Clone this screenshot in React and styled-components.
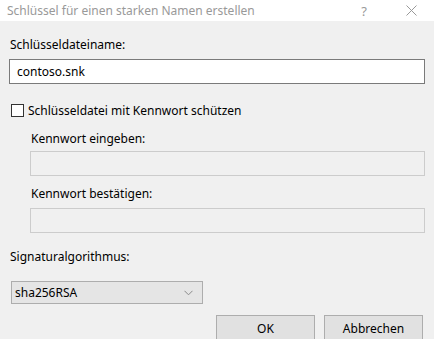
import React from 'react'
import styled, { createGlobalStyle } from 'styled-components'

const Global = createGlobalStyle`
  html, body {
    margin: 0;
    padding: 0;
    background: #f0f0f0;
    overflow: hidden;
  }
  * {
    box-sizing: border-box;
  }
`

const Dialog = styled.div`
  width: 434px;
  height: 339px;
  background: #f0f0f0;
  font-family: 'Noto Sans', 'Open Sans', sans-serif;
  font-size: 12px;
  color: #000;
  overflow: hidden;
`

const TitleBar = styled.div`
  height: 21px;
  background: #fff;
  display: flex;
  align-items: center;
  padding-left: 7px;
  color: #999;
  font-size: 12px;
`

const Title = styled.span`
  flex: 1;
`

const TitleButton = styled.span`
  width: ${props => props.w}px;
  margin-right: ${props => props.gap || 0}px;
  display: flex;
  align-items: center;
  justify-content: center;
  color: #999;
  font-size: 13px;
`

const Body = styled.div`
  display: flex;
  flex-direction: column;
  padding: 0 9px 0 9px;
`

const Label = styled.div`
  margin-left: ${props => props.indent || 1}px;
  margin-top: ${props => props.top}px;
  height: 16px;
  line-height: 16px;
`

const TextBox = styled.div`
  margin-left: ${props => props.indent || 0}px;
  margin-top: ${props => props.top}px;
  height: 25px;
  border: 1px solid ${props => (props.disabled ? '#cccccc' : '#7a7a7a')};
  background: ${props => (props.disabled ? '#f0f0f0' : '#fff')};
  display: flex;
  align-items: center;
  padding-left: 7px;
`

const CheckRow = styled.label`
  display: flex;
  align-items: center;
  gap: 4px;
  margin-top: 18px;
  margin-left: 2px;
  height: 16px;
`

const Box = styled.span`
  width: 13px;
  height: 13px;
  border: 1px solid #333;
  background: #fff;
`

const Select = styled.div`
  margin-left: 2px;
  margin-top: 16px;
  width: 192px;
  height: 23px;
  border: 1px solid #adadad;
  background: #e5e5e5;
  display: flex;
  align-items: center;
  justify-content: space-between;
  padding: 0 9px 0 3px;
`

const Footer = styled.div`
  display: flex;
  justify-content: flex-end;
  gap: 9px;
  margin-top: 11px;
  padding-right: 2px;
`

const Button = styled.div`
  width: 99px;
  height: 26px;
  border: 1px solid #adadad;
  background: #e1e1e1;
  display: flex;
  align-items: center;
  justify-content: center;
`

const Chevron = () => (
  <svg width="9" height="6" viewBox="0 0 9 6">
    <path d="M0.5 0.8 L4.5 4.8 L8.5 0.8" fill="none" stroke="#8a8a8a" strokeWidth="1" />
  </svg>
)

const CloseIcon = () => (
  <svg width="11" height="11" viewBox="0 0 11 11">
    <path d="M0.5 0.5 L10.5 10.5 M10.5 0.5 L0.5 10.5" fill="none" stroke="#999" strokeWidth="1" />
  </svg>
)

const App = () => {
  return (
    <Dialog>
      <Global />
      <TitleBar>
        <Title>Schlüssel für einen starken Namen erstellen</Title>
        <TitleButton w={30} gap={9}>?</TitleButton>
        <TitleButton w={46}><CloseIcon /></TitleButton>
      </TitleBar>
      <Body>
        <Label top={16}>Schlüsseldateiname:</Label>
        <TextBox top={6}>contoso.snk</TextBox>
        <CheckRow>
          <Box />
          Schlüsseldatei mit Kennwort schützen
        </CheckRow>
        <Label indent={22} top={13}>Kennwort eingeben:</Label>
        <TextBox indent={21} top={4} disabled />
        <Label indent={22} top={10}>Kennwort bestätigen:</Label>
        <TextBox indent={21} top={6} disabled />
        <Label top={16}>Signaturalgorithmus:</Label>
        <Select>
          sha256RSA
          <Chevron />
        </Select>
        <Footer>
          <Button>OK</Button>
          <Button>Abbrechen</Button>
        </Footer>
      </Body>
    </Dialog>
  )
}

export default App
